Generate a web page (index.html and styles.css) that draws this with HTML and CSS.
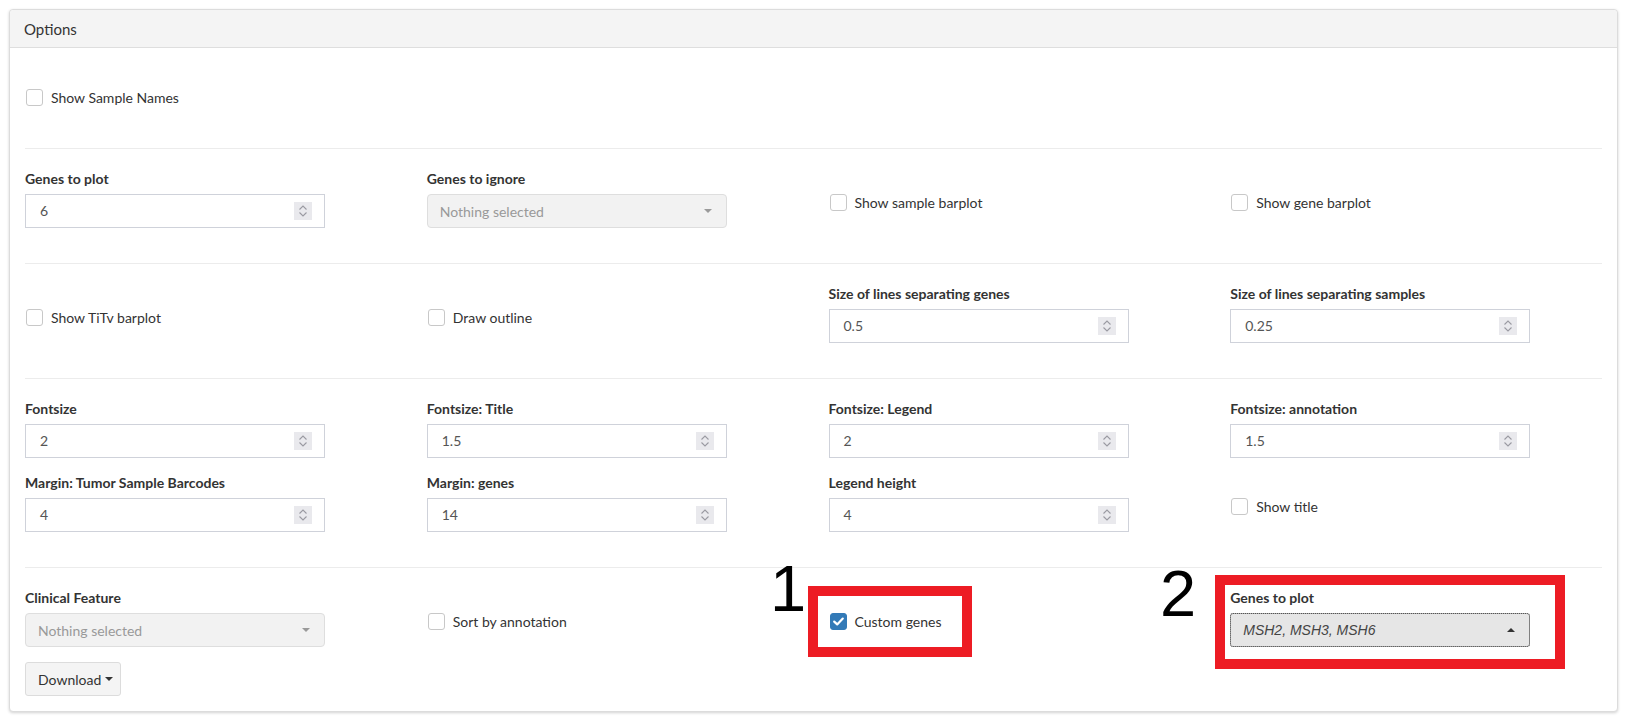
FILE: index.html
```html
<!DOCTYPE html>
<html>
<head>
<meta charset="utf-8">
<link rel="stylesheet" href="styles.css">
</head>
<body>
<div class="page">
  <div class="panel">
    <div class="panel-heading">Options</div>
    <div class="panel-body">

      <div class="row">
        <div class="col">
          <div class="check-group first"><span class="cb"></span><span class="cb-text">Show Sample Names</span></div>
        </div>
      </div>
      <hr>

      <div class="row">
        <div class="col">
          <div class="form-group"><label class="lbl">Genes to plot</label>
            <div class="num-input"><span class="val">6</span><span class="spin"><svg width="18" height="18" viewBox="0 0 18 18"><path d="M5.5 7.5 L9 4 L12.5 7.5 M5.5 10.5 L9 14 L12.5 10.5" fill="none" stroke="#9a9aa2" stroke-width="1.1"/></svg></span></div>
          </div>
        </div>
        <div class="col">
          <div class="form-group"><label class="lbl">Genes to ignore</label>
            <div class="sel-disabled"><span>Nothing selected</span><span class="caret-down"></span></div>
          </div>
        </div>
        <div class="col">
          <div class="check-group"><span class="cb"></span><span class="cb-text">Show sample barplot</span></div>
        </div>
        <div class="col">
          <div class="check-group"><span class="cb"></span><span class="cb-text">Show gene barplot</span></div>
        </div>
      </div>
      <hr>

      <div class="row">
        <div class="col">
          <div class="check-group"><span class="cb"></span><span class="cb-text">Show TiTv barplot</span></div>
        </div>
        <div class="col">
          <div class="check-group"><span class="cb"></span><span class="cb-text">Draw outline</span></div>
        </div>
        <div class="col">
          <div class="form-group"><label class="lbl">Size of lines separating genes</label>
            <div class="num-input"><span class="val">0.5</span><span class="spin"><svg width="18" height="18" viewBox="0 0 18 18"><path d="M5.5 7.5 L9 4 L12.5 7.5 M5.5 10.5 L9 14 L12.5 10.5" fill="none" stroke="#9a9aa2" stroke-width="1.1"/></svg></span></div>
          </div>
        </div>
        <div class="col">
          <div class="form-group"><label class="lbl">Size of lines separating samples</label>
            <div class="num-input"><span class="val">0.25</span><span class="spin"><svg width="18" height="18" viewBox="0 0 18 18"><path d="M5.5 7.5 L9 4 L12.5 7.5 M5.5 10.5 L9 14 L12.5 10.5" fill="none" stroke="#9a9aa2" stroke-width="1.1"/></svg></span></div>
          </div>
        </div>
      </div>
      <hr>

      <div class="row">
        <div class="col">
          <div class="form-group"><label class="lbl">Fontsize</label>
            <div class="num-input"><span class="val">2</span><span class="spin"><svg width="18" height="18" viewBox="0 0 18 18"><path d="M5.5 7.5 L9 4 L12.5 7.5 M5.5 10.5 L9 14 L12.5 10.5" fill="none" stroke="#9a9aa2" stroke-width="1.1"/></svg></span></div>
          </div>
          <div class="form-group"><label class="lbl">Margin: Tumor Sample Barcodes</label>
            <div class="num-input"><span class="val">4</span><span class="spin"><svg width="18" height="18" viewBox="0 0 18 18"><path d="M5.5 7.5 L9 4 L12.5 7.5 M5.5 10.5 L9 14 L12.5 10.5" fill="none" stroke="#9a9aa2" stroke-width="1.1"/></svg></span></div>
          </div>
        </div>
        <div class="col">
          <div class="form-group"><label class="lbl">Fontsize: Title</label>
            <div class="num-input"><span class="val">1.5</span><span class="spin"><svg width="18" height="18" viewBox="0 0 18 18"><path d="M5.5 7.5 L9 4 L12.5 7.5 M5.5 10.5 L9 14 L12.5 10.5" fill="none" stroke="#9a9aa2" stroke-width="1.1"/></svg></span></div>
          </div>
          <div class="form-group"><label class="lbl">Margin: genes</label>
            <div class="num-input"><span class="val">14</span><span class="spin"><svg width="18" height="18" viewBox="0 0 18 18"><path d="M5.5 7.5 L9 4 L12.5 7.5 M5.5 10.5 L9 14 L12.5 10.5" fill="none" stroke="#9a9aa2" stroke-width="1.1"/></svg></span></div>
          </div>
        </div>
        <div class="col">
          <div class="form-group"><label class="lbl">Fontsize: Legend</label>
            <div class="num-input"><span class="val">2</span><span class="spin"><svg width="18" height="18" viewBox="0 0 18 18"><path d="M5.5 7.5 L9 4 L12.5 7.5 M5.5 10.5 L9 14 L12.5 10.5" fill="none" stroke="#9a9aa2" stroke-width="1.1"/></svg></span></div>
          </div>
          <div class="form-group"><label class="lbl">Legend height</label>
            <div class="num-input"><span class="val">4</span><span class="spin"><svg width="18" height="18" viewBox="0 0 18 18"><path d="M5.5 7.5 L9 4 L12.5 7.5 M5.5 10.5 L9 14 L12.5 10.5" fill="none" stroke="#9a9aa2" stroke-width="1.1"/></svg></span></div>
          </div>
        </div>
        <div class="col">
          <div class="form-group"><label class="lbl">Fontsize: annotation</label>
            <div class="num-input"><span class="val">1.5</span><span class="spin"><svg width="18" height="18" viewBox="0 0 18 18"><path d="M5.5 7.5 L9 4 L12.5 7.5 M5.5 10.5 L9 14 L12.5 10.5" fill="none" stroke="#9a9aa2" stroke-width="1.1"/></svg></span></div>
          </div>
          <div class="check-group"><span class="cb"></span><span class="cb-text">Show title</span></div>
        </div>
      </div>
      <hr>

      <div class="row">
        <div class="col">
          <div class="form-group"><label class="lbl">Clinical Feature</label>
            <div class="sel-disabled"><span>Nothing selected</span><span class="caret-down"></span></div>
          </div>
          <button class="btn">Download <span class="btn-caret"></span></button>
        </div>
        <div class="col">
          <div class="check-group"><span class="cb"></span><span class="cb-text">Sort by annotation</span></div>
        </div>
        <div class="col">
          <div class="check-group"><span class="cb checked"><svg width="17" height="17" viewBox="0 0 17 17"><path d="M4.2 8.6 L7.2 11.4 L12.8 5.6" fill="none" stroke="#fff" stroke-width="2.2" stroke-linecap="round" stroke-linejoin="round"/></svg></span><span class="cb-text">Custom genes</span></div>
        </div>
        <div class="col">
          <div class="form-group"><label class="lbl">Genes to plot</label>
            <div class="sel-open"><span class="sel-text">MSH2, MSH3, MSH6</span><span class="caret-up"></span></div>
          </div>
        </div>
      </div>

    </div>
  </div>

  <div class="mark box1"></div>
  <div class="mark box2"></div>
  <div class="num num1">1</div>
  <div class="num num2">2</div>
</div>
</body>
</html>
```

FILE: styles.css
```css
* { box-sizing: border-box; }
html, body { margin: 0; padding: 0; background: #fff; }
body {
  font-family: "Lato", "Liberation Sans", sans-serif;
  font-size: 14px;
  color: #333;
}
.page {
  position: relative;
  padding: 9px 11px 4px 9px;
}
.panel {
  border: 1px solid #dcdcdc;
  border-radius: 4px;
  box-shadow: 0 1px 3px rgba(0,0,0,0.18);
  background: #fff;
}
.panel-heading {
  height: 38px;
  padding: 0 14px;
  line-height: 39px;
  font-size: 15px;
  color: #333;
  background: #f4f4f4;
  border-bottom: 1px solid #dedede;
  border-radius: 4px 4px 0 0;
}
.panel-body {
  padding: 15px;
}
.row {
  display: grid;
  grid-template-columns: repeat(4, 1fr);
  column-gap: 30px;
  align-items: start;
}
hr {
  margin: 20px 0;
  border: 0;
  border-top: 1px solid #ececec;
  height: 0;
}
.form-group { margin-bottom: 15px; }
.lbl {
  display: block;
  font-weight: bold;
  line-height: 20px;
  height: 20px;
  margin-bottom: 5px;
  color: #333;
  white-space: nowrap;
}
.num-input {
  width: 300px;
  height: 34px;
  border: 1px solid #cfd2da;
  display: flex;
  align-items: center;
  justify-content: space-between;
  padding: 0 12px 0 14px;
  color: #555;
}
.val { line-height: 20px; }
.spin {
  width: 18px;
  height: 18px;
  background: #e9e9ed;
  display: flex;
}
.sel-disabled {
  width: 300px;
  height: 34px;
  border: 1px solid #dedede;
  border-radius: 4px;
  background: #f2f2f2;
  color: #999;
  display: flex;
  align-items: center;
  justify-content: space-between;
  padding: 0 14px 0 12px;
}
.caret-down {
  width: 0; height: 0;
  border-left: 4px solid transparent;
  border-right: 4px solid transparent;
  border-top: 4px solid #9a9a9a;
}
.caret-up {
  width: 0; height: 0;
  border-left: 4px solid transparent;
  border-right: 4px solid transparent;
  border-bottom: 4px solid #333;
}
.sel-open {
  width: 300px;
  height: 34px;
  border: 1px solid #adadad;
  border-radius: 3px;
  background: #e6e6e6;
  outline: 1px dotted #555;
  outline-offset: -1px;
  display: flex;
  align-items: center;
  justify-content: space-between;
  padding: 0 14px 0 12px;
}
.sel-text {
  font-style: italic;
  color: #444;
  font-family: "Liberation Sans", sans-serif;
  font-size: 14px;
}
.check-group {
  display: flex;
  align-items: center;
  padding-top: 25px;
  padding-bottom: 23px;
  height: 65px;
}
.check-group.first {
  padding-top: 26px;
  padding-bottom: 22px;
}
.cb {
  width: 17px;
  height: 17px;
  border: 1px solid #c8c8c8;
  border-radius: 3px;
  flex: none;
  margin-left: 1px;
  display: flex;
  background: #fff;
}
.cb.checked {
  background: #337ab7;
  border-color: #337ab7;
}
.cb.checked svg { margin: -1px; }
.cb-text {
  margin-left: 8px;
  line-height: 17px;
  color: #333;
}
.btn {
  font-family: inherit;
  font-size: 14px;
  color: #333;
  background: #f4f4f4;
  border: 1px solid #dcdcdc;
  border-radius: 3px;
  height: 34px;
  width: 96px;
  padding: 0 12px;
  display: flex;
  align-items: center;
  gap: 4px;
}
.btn-caret {
  width: 0; height: 0;
  border-left: 4px solid transparent;
  border-right: 4px solid transparent;
  border-top: 4px solid #333;
}

/* annotation overlays */
.mark {
  position: absolute;
  border: 10px solid #ed1c24;
}
.box1 { left: 808px; top: 586px; width: 164px; height: 71px; }
.box2 { left: 1215px; top: 575px; width: 350px; height: 94px; }
.num {
  position: absolute;
  font-family: "Liberation Sans", sans-serif;
  font-size: 65px;
  line-height: 1;
  color: #000;
}
.num1 { left: 770px; top: 556px; }
.num2 { left: 1160px; top: 561px; }
```
